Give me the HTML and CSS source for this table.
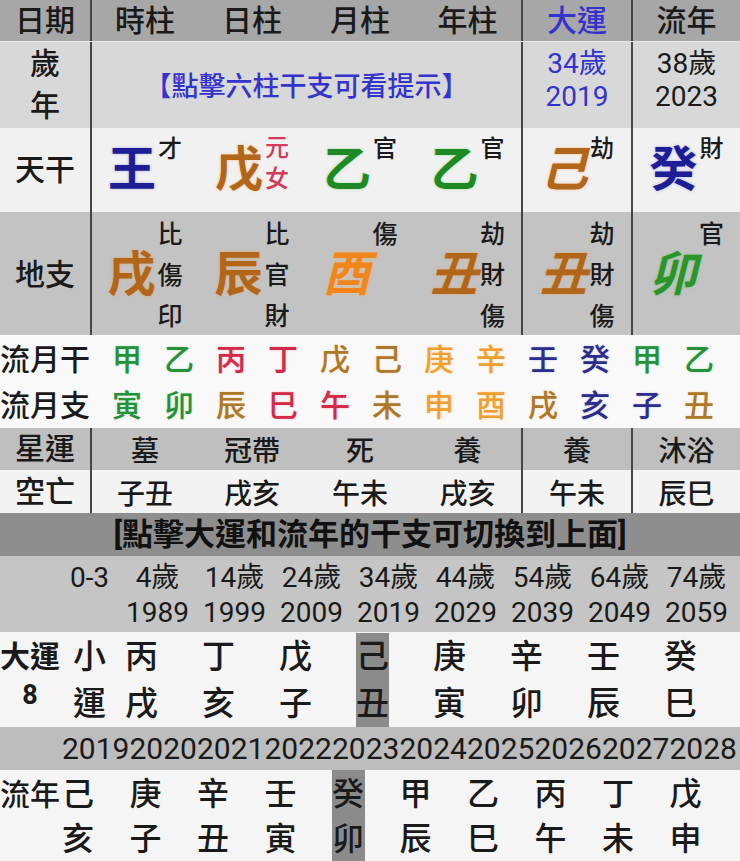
FILE: index.html
```html
<!DOCTYPE html>
<html lang="zh-Hant">
<head>
<meta charset="utf-8">
<title>八字排盤</title>
<link rel="stylesheet" href="styles.css">
</head>
<body>
<div class="chart">
  <div class="row head">
    <div>日期</div>
    <div class="bl">時柱</div>
    <div>日柱</div>
    <div>月柱</div>
    <div>年柱</div>
    <div class="bl blue">大運</div>
    <div class="bl">流年</div>
  </div>

  <div class="row agerow">
    <div class="stack30"><span>歲</span><span>年</span></div>
    <div class="bl prompt">【點擊六柱干支可看提示】</div>
    <div class="bl stack28 blue"><span>34歲</span><span>2019</span></div>
    <div class="bl stack28"><span>38歲</span><span>2023</span></div>
  </div>

  <div class="row stemrow">
    <div class="label">天干</div>
    <div class="bl gz"><span class="big water">王</span><span class="sup">才</span></div>
    <div class="gz"><span class="big earth">戊</span><span class="sup two red"><span>元</span><span>女</span></span></div>
    <div class="gz"><span class="big wood">乙</span><span class="sup">官</span></div>
    <div class="gz"><span class="big wood">乙</span><span class="sup">官</span></div>
    <div class="bl gz"><span class="big earth ital">己</span><span class="sup">劫</span></div>
    <div class="bl gz"><span class="big water">癸</span><span class="sup">財</span></div>
  </div>

  <div class="row branchrow">
    <div class="label">地支</div>
    <div class="bl gz"><span class="big earth">戌</span><span class="sub"><span>比</span><span>傷</span><span>印</span></span></div>
    <div class="gz"><span class="big earth">辰</span><span class="sub"><span>比</span><span>官</span><span>財</span></span></div>
    <div class="gz"><span class="big metal ital">酉</span><span class="sub"><span>傷</span></span></div>
    <div class="gz"><span class="big earth ital">丑</span><span class="sub"><span>劫</span><span>財</span><span>傷</span></span></div>
    <div class="bl gz"><span class="big earth ital">丑</span><span class="sub"><span>劫</span><span>財</span><span>傷</span></span></div>
    <div class="bl gz"><span class="big wood2 ital">卯</span><span class="sub"><span>官</span></span></div>
  </div>

  <div class="months">
    <div class="mrow">
      <div class="mlabel">流月干</div>
      <span class="mg">甲</span><span class="mg">乙</span><span class="mr">丙</span><span class="mr">丁</span>
      <span class="mb">戊</span><span class="mb">己</span><span class="mo">庚</span><span class="mo">辛</span>
      <span class="mw">壬</span><span class="mw">癸</span><span class="mg">甲</span><span class="mg">乙</span>
    </div>
    <div class="mrow">
      <div class="mlabel">流月支</div>
      <span class="mg">寅</span><span class="mg">卯</span><span class="mb">辰</span><span class="mr">巳</span>
      <span class="mr">午</span><span class="mb">未</span><span class="mo">申</span><span class="mo">酉</span>
      <span class="mb">戌</span><span class="mw">亥</span><span class="mw">子</span><span class="mb">丑</span>
    </div>
  </div>

  <div class="row starrow">
    <div class="label">星運</div>
    <div class="bl">墓</div>
    <div>冠帶</div>
    <div>死</div>
    <div>養</div>
    <div class="bl">養</div>
    <div class="bl">沐浴</div>
  </div>

  <div class="row voidrow">
    <div class="label">空亡</div>
    <div class="bl">子丑</div>
    <div>戌亥</div>
    <div>午未</div>
    <div>戌亥</div>
    <div class="bl">午未</div>
    <div class="bl">辰巳</div>
  </div>

  <div class="banner">[點擊大運和流年的干支可切換到上面]</div>

  <div class="ages">
    <div class="brow">
      <span></span><span>0-3</span><span>4歲</span><span>14歲</span><span>24歲</span><span>34歲</span>
      <span>44歲</span><span>54歲</span><span>64歲</span><span>74歲</span>
    </div>
    <div class="brow">
      <span></span><span></span><span>1989</span><span>1999</span><span>2009</span><span>2019</span>
      <span>2029</span><span>2039</span><span>2049</span><span>2059</span>
    </div>
  </div>

  <div class="dayun">
    <div class="dlabel"><span class="dl1">大運</span><span class="dl2">8</span></div>
    <div class="xiao"><span>小</span><span>運</span></div>
    <div class="dcol"><div class="pair"><span>丙</span><span>戌</span></div></div>
    <div class="dcol"><div class="pair"><span>丁</span><span>亥</span></div></div>
    <div class="dcol"><div class="pair"><span>戊</span><span>子</span></div></div>
    <div class="dcol"><div class="pair hl"><span>己</span><span>丑</span></div></div>
    <div class="dcol"><div class="pair"><span>庚</span><span>寅</span></div></div>
    <div class="dcol"><div class="pair"><span>辛</span><span>卯</span></div></div>
    <div class="dcol"><div class="pair"><span>壬</span><span>辰</span></div></div>
    <div class="dcol"><div class="pair"><span>癸</span><span>巳</span></div></div>
  </div>

  <div class="years">
    <span></span><span>2019</span><span>2020</span><span>2021</span><span>2022</span><span>2023</span>
    <span>2024</span><span>2025</span><span>2026</span><span>2027</span><span>2028</span>
  </div>

  <div class="liunian">
    <div class="lnlabel">流年</div>
    <div class="pair2"><span>己</span><span>亥</span></div>
    <div class="pair2"><span>庚</span><span>子</span></div>
    <div class="pair2"><span>辛</span><span>丑</span></div>
    <div class="pair2"><span>壬</span><span>寅</span></div>
    <div class="pair2 hl"><span>癸</span><span>卯</span></div>
    <div class="pair2"><span>甲</span><span>辰</span></div>
    <div class="pair2"><span>乙</span><span>巳</span></div>
    <div class="pair2"><span>丙</span><span>午</span></div>
    <div class="pair2"><span>丁</span><span>未</span></div>
    <div class="pair2"><span>戊</span><span>申</span></div>
  </div>
</div>
</body>
</html>
```

FILE: styles.css
```css
* {
  box-sizing: border-box;
  margin: 0;
  padding: 0;
}

html, body {
  width: 740px;
  height: 861px;
  overflow: hidden;
}

body {
  font-family: Roboto, "Noto Sans CJK TC", sans-serif;
  font-weight: 500;
  color: #1a1a1a;
  background: #f5f5f5;
}

.chart {
  width: 740px;
  display: flex;
  flex-direction: column;
}

/* ---------- pillar table ---------- */
.row {
  display: grid;
  grid-template-columns: 90px 108px 108px 108px 107px 110px 109px;
}

.row > div {
  display: flex;
  align-items: center;
  justify-content: center;
}

.bl {
  border-left: 2px solid #454545;
}

.blue {
  color: #3434cc;
}

.head {
  height: 41px;
  background: #a7a7a7;
  font-size: 30px;
  line-height: 41px;
}

.label {
  font-size: 30px;
  line-height: 36px;
}

.agerow {
  height: 87px;
  background: #d8d8d8;
  border-top: 1px solid #e6e6e6;
}

.stack30 {
  flex-direction: column;
  font-size: 30px;
  line-height: 42px;
}

.row > .stack28 {
  flex-direction: column;
  justify-content: flex-start;
  padding-top: 5px;
  font-size: 28px;
  font-weight: 400;
  line-height: 33px;
}

.prompt {
  grid-column: 2 / 6;
  font-size: 27px;
  color: #3434cc;
  padding-bottom: 2px;
}

.stemrow {
  height: 84px;
  background: #f1f1f1;
}

.branchrow {
  height: 123px;
  background: #c3c3c3;
}

.gz .big {
  font-size: 48px;
  line-height: 1;
  font-weight: 700;
}

.ital {
  font-style: italic;
}

.sup {
  align-self: flex-start;
  margin-top: 7px;
  margin-left: 2px;
  font-size: 24px;
  line-height: 28px;
  display: flex;
  flex-direction: column;
}

.sup.two {
  margin-top: 5px;
  line-height: 31px;
}

.sub {
  align-self: flex-start;
  margin-top: 2px;
  margin-left: 2px;
  font-size: 25px;
  line-height: 41px;
  display: flex;
  flex-direction: column;
}

.water { color: #1d1d96; text-shadow: 0 0 3px rgba(90, 90, 220, 0.45); }
.earth { color: #b2661a; text-shadow: 0 0 3px rgba(240, 160, 70, 0.55); }
.wood { color: #1f8a24; text-shadow: 0 0 3px rgba(90, 200, 90, 0.5); }
.wood2 { color: #2a962a; text-shadow: 0 0 3px rgba(90, 200, 90, 0.5); }
.metal { color: #f0861c; text-shadow: 0 0 3px rgba(255, 180, 90, 0.6); }
.red { color: #d23c5c; }

/* ---------- monthly rows ---------- */
.months {
  height: 93px;
  padding-top: 1px;
  background: #f9f9f9;
  border-top: 1px solid #ffffff;
}

.mrow {
  display: grid;
  grid-template-columns: 101px repeat(12, 52px);
  height: 46px;
  line-height: 46px;
  font-size: 30px;
  text-align: center;
}

.mlabel {
  text-align: left;
  color: #1a1a1a;
}

.mg { color: #26903a; text-shadow: 0 0 2px rgba(100, 210, 110, 0.5); }
.mr { color: #d22a48; text-shadow: 0 0 2px rgba(240, 110, 130, 0.5); }
.mb { color: #ae782a; text-shadow: 0 0 2px rgba(240, 180, 90, 0.5); }
.mo { color: #f0a030; text-shadow: 0 0 2px rgba(255, 200, 110, 0.6); }
.mw { color: #2c2c8c; text-shadow: 0 0 2px rgba(120, 120, 220, 0.45); }

.starrow {
  height: 42px;
  background: #bfbfbf;
  font-size: 28px;
}

.voidrow {
  height: 43px;
  background: #f3f3f3;
  font-size: 28px;
}

/* ---------- banner ---------- */
.banner {
  height: 43px;
  background: #8e8e8e;
  font-size: 31px;
  font-weight: 700;
  line-height: 43px;
  text-align: center;
  color: #111;
}

/* ---------- big luck ---------- */
.ages {
  height: 76px;
  padding-top: 4px;
  background: #c5c5c5;
}

.brow {
  display: grid;
  grid-template-columns: 60px 59px repeat(8, 77px);
  font-size: 28px;
  font-weight: 400;
  line-height: 35px;
  text-align: center;
}

.dayun {
  display: grid;
  grid-template-columns: 60px 59px repeat(8, 77px);
  height: 95px;
  background: #f5f5f5;
  padding-top: 1px;
}

.dlabel {
  display: flex;
  flex-direction: column;
  align-items: center;
}

.dl1 {
  font-size: 30px;
  font-weight: 700;
  line-height: 47px;
}

.dl2 {
  font-size: 27px;
  font-weight: 700;
  line-height: 30px;
}

.xiao {
  display: flex;
  flex-direction: column;
  align-items: center;
  font-size: 33px;
  line-height: 47px;
}

.dcol {
  padding-left: 6px;
}

.pair {
  width: 33px;
  height: 94px;
  display: flex;
  flex-direction: column;
  font-size: 33px;
  line-height: 47px;
}

.hl {
  background: #8b8b8b;
}

/* ---------- annual ---------- */
.years {
  display: grid;
  grid-template-columns: 62px repeat(10, 67.5px);
  height: 43px;
  background: #bdbdbd;
  font-size: 30px;
  font-weight: 400;
  line-height: 43px;
}

.liunian {
  display: grid;
  grid-template-columns: 62px repeat(10, 67.5px);
  height: 91px;
  background: #f5f5f5;
}

.lnlabel {
  font-size: 30px;
  line-height: 45px;
  padding-top: 2px;
}

.pair2 {
  width: 33px;
  height: 91px;
  padding-top: 2px;
  display: flex;
  flex-direction: column;
  font-size: 32px;
  line-height: 44.5px;
}
```
